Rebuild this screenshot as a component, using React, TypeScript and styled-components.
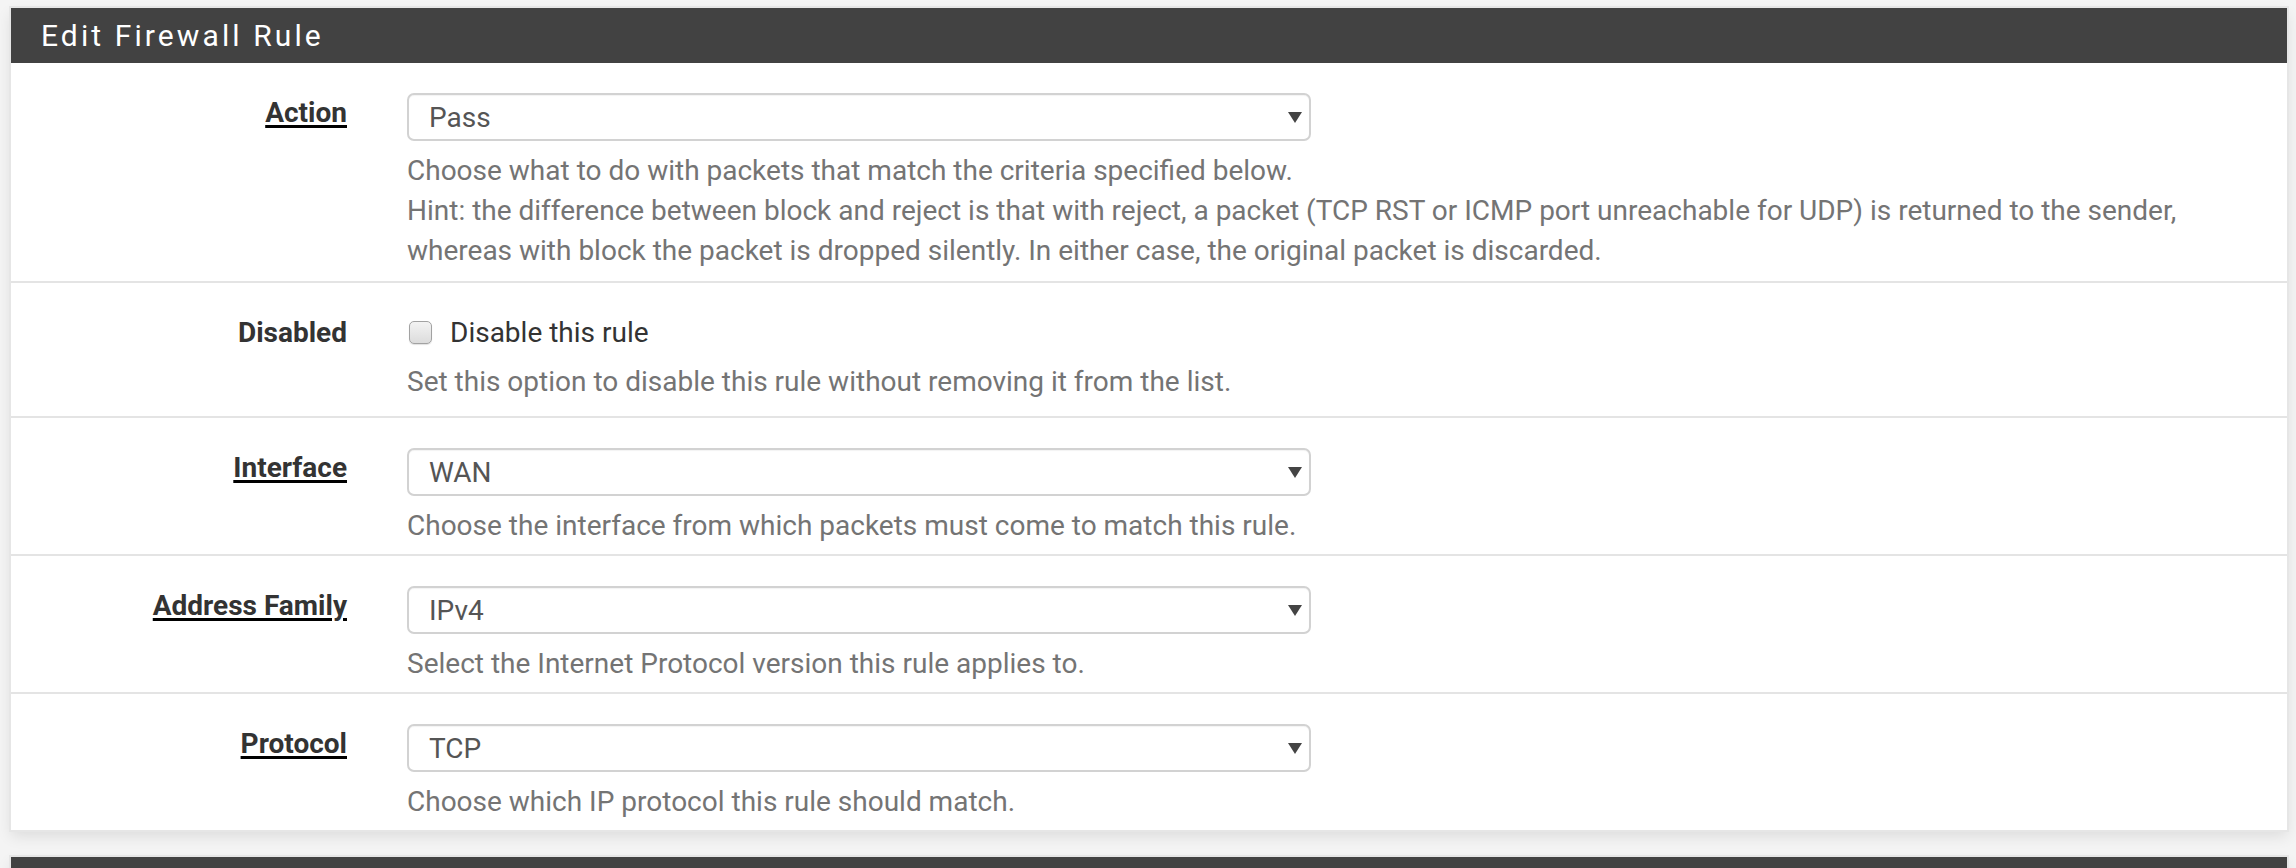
import React from "react";
import styled, { createGlobalStyle } from "styled-components";

const GlobalStyle = createGlobalStyle`
  html, body {
    margin: 0;
    padding: 0;
    background: #f4f4f4;
    font-family: Roboto, "Liberation Sans", Arial, sans-serif;
  }
  * { box-sizing: border-box; }
`;

const Page = styled.div`
  display: flex;
  flex-direction: column;
  gap: 27px;
  padding: 8px 9px 0 11px;
`;

const Panel = styled.section`
  background: #fff;
  box-shadow: 0 0 0 2px #e6e6e6, 0 6px 14px rgba(0, 0, 0, 0.1);
`;

const PanelHeading = styled.div`
  display: flex;
  align-items: center;
  height: 55px;
  padding: 0 30px;
  background: #424242;
`;

const PanelTitle = styled.h2`
  margin: 0;
  font-size: 30px;
  font-weight: 400;
  letter-spacing: 3.1px;
  color: #fff;
  line-height: 1;
`;

const FormRow = styled.div<{ $extraBottom?: number }>`
  display: flex;
  align-items: flex-start;
  padding: 27px 0 ${(p) => 8 + (p.$extraBottom ?? 0)}px;
  & + & {
    border-top: 2px solid #e4e4e4;
  }
`;

const LabelCol = styled.div`
  flex: none;
  width: 336px;
  margin-top: 3px;
  text-align: right;
  font-size: 28px;
  line-height: 40px;
  font-weight: 700;
  color: #333;
`;

const LabelText = styled.span<{ $underline?: boolean }>`
  text-decoration: ${(p) => (p.$underline ? "underline" : "none")};
  text-decoration-color: #000;
  text-decoration-thickness: 3px;
  text-underline-offset: 3px;
`;

const Content = styled.div`
  flex: 1;
  min-width: 0;
  margin-left: 60px;
  padding-right: 30px;
`;

const SelectBox = styled.div`
  display: flex;
  align-items: center;
  justify-content: space-between;
  width: 904px;
  height: 48px;
  margin-top: 3px;
  padding: 0 7px 0 20px;
  border: 2px solid #d2d2d2;
  border-radius: 7px;
  background: #fff;
  box-shadow: inset 0 1px 1px rgba(0, 0, 0, 0.05);
  font-size: 28px;
  color: #555;
`;

const HelpBlock = styled.div`
  margin-top: 10px;
  font-size: 28px;
  line-height: 40px;
  color: #747474;
`;

const CheckLine = styled.label`
  display: flex;
  align-items: center;
  height: 40px;
  margin-top: 2px;
  font-size: 28px;
  color: #333;
`;

const CheckBoxMark = styled.span`
  flex: none;
  width: 23px;
  height: 23px;
  margin: 0 18px 0 2px;
  border: 1px solid #a2a2a2;
  border-radius: 5px;
  background: linear-gradient(#f3f3f3, #dcdcdc);
  box-shadow: 0 1px 1px rgba(0, 0, 0, 0.12);
`;

const Arrow = () => (
  <svg width="14" height="11" viewBox="0 0 14 11" aria-hidden="true">
    <path d="M0 0 H14 L7 11 Z" fill="#444" />
  </svg>
);

const Select = ({ value }: { value: string }) => (
  <SelectBox>
    <span>{value}</span>
    <Arrow />
  </SelectBox>
);

type Field = {
  label: string;
  underline: boolean;
  value: string;
  help: React.ReactNode;
};

const fields: Field[] = [
  {
    label: "Interface",
    underline: true,
    value: "WAN",
    help: "Choose the interface from which packets must come to match this rule.",
  },
  {
    label: "Address Family",
    underline: true,
    value: "IPv4",
    help: "Select the Internet Protocol version this rule applies to.",
  },
  {
    label: "Protocol",
    underline: true,
    value: "TCP",
    help: "Choose which IP protocol this rule should match.",
  },
];

export default function App() {
  return (
    <>
      <GlobalStyle />
      <Page>
        <Panel>
          <PanelHeading>
            <PanelTitle>Edit Firewall Rule</PanelTitle>
          </PanelHeading>

          <FormRow $extraBottom={2}>
            <LabelCol>
              <LabelText $underline>Action</LabelText>
            </LabelCol>
            <Content>
              <Select value="Pass" />
              <HelpBlock>
                Choose what to do with packets that match the criteria specified below.
                <br />
                Hint: the difference between block and reject is that with reject, a packet (TCP RST or ICMP port
                unreachable for UDP) is returned to the sender,
                <br />
                whereas with block the packet is dropped silently. In either case, the original packet is discarded.
              </HelpBlock>
            </Content>
          </FormRow>

          <FormRow $extraBottom={6}>
            <LabelCol>
              <LabelText>Disabled</LabelText>
            </LabelCol>
            <Content>
              <CheckLine>
                <CheckBoxMark />
                Disable this rule
              </CheckLine>
              <HelpBlock>Set this option to disable this rule without removing it from the list.</HelpBlock>
            </Content>
          </FormRow>

          {fields.map((f) => (
            <FormRow key={f.label}>
              <LabelCol>
                <LabelText $underline={f.underline}>{f.label}</LabelText>
              </LabelCol>
              <Content>
                <Select value={f.value} />
                <HelpBlock>{f.help}</HelpBlock>
              </Content>
            </FormRow>
          ))}
        </Panel>

        <Panel>
          <PanelHeading />
        </Panel>
      </Page>
    </>
  );
}
